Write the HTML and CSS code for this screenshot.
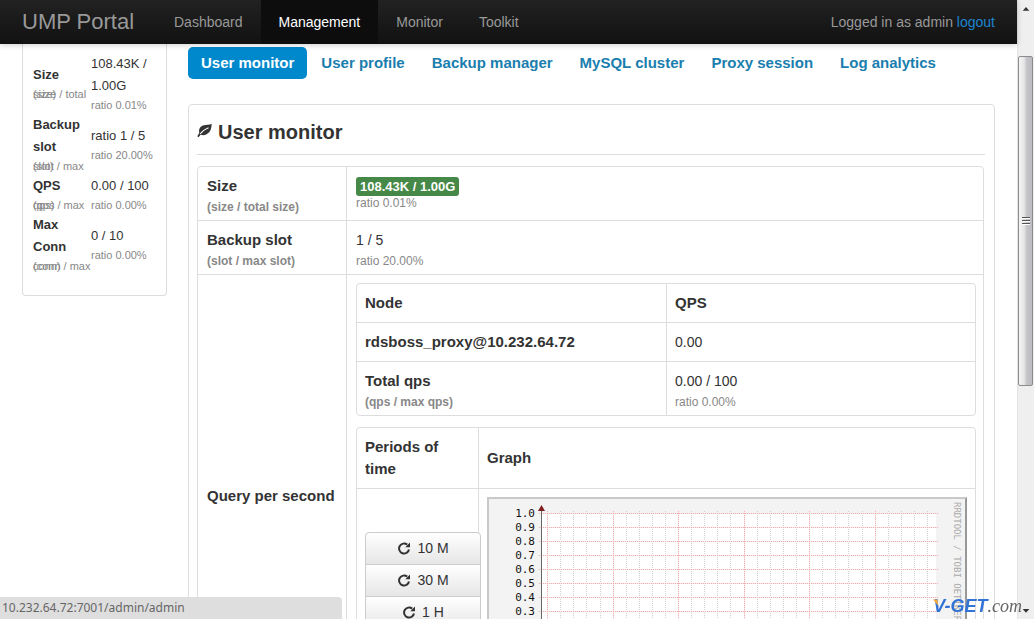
FILE: index.html
```html
<!DOCTYPE html>
<html lang="en">
<head>
<meta charset="utf-8">
<title>UMP Portal</title>
<link rel="stylesheet" href="styles.css">
</head>
<body>
<svg class="defs" aria-hidden="true">
  <symbol id="repeat" viewBox="0 0 14 14">
    <path d="M12 8.500A5 5 0 1 1 10.200 3.600" fill="none" stroke="#333" stroke-width="2"/>
    <path d="M13 1.500V6.200H8.300z" fill="#333"/>
  </symbol>
</svg>
<div class="window">
  <div class="page">
    <header class="navbar">
      <a class="brand" href="#">UMP Portal</a>
      <nav class="menu">
        <a href="#">Dashboard</a>
        <a class="active" href="#">Management</a>
        <a href="#">Monitor</a>
        <a href="#">Toolkit</a>
      </nav>
      <p class="login">Logged in as admin <a href="#">logout</a></p>
    </header>
    <div class="content">
      <aside class="sidebar">
        <table class="stats">
          <tr><th>Size<small>(size / total size)</small></th><td>108.43K / 1.00G<small>ratio 0.01%</small></td></tr>
          <tr><th>Backup slot<small>(slot / max slot)</small></th><td>ratio 1 / 5<small>ratio 20.00%</small></td></tr>
          <tr><th>QPS<small>(qps / max qps)</small></th><td>0.00 / 100<small>ratio 0.00%</small></td></tr>
          <tr><th>Max Conn<small>(conn / max conn)</small></th><td>0 / 10<small>ratio 0.00%</small></td></tr>
        </table>
      </aside>
      <main class="main">
        <nav class="pills">
          <a class="active" href="#">User monitor</a>
          <a href="#">User profile</a>
          <a href="#">Backup manager</a>
          <a href="#">MySQL cluster</a>
          <a href="#">Proxy session</a>
          <a href="#">Log analytics</a>
        </nav>
        <section class="panel">
          <h1>
            <svg class="leaf" viewBox="0 0 14 14" aria-hidden="true">
              <path d="M13.700.6C12 2 8.500 1.300 5.600 2.400 2.500 3.600 1.400 6.300 2.200 9.200L.3 12.400l1.200.9 1.800-2.300c3 1 6.200.2 8.200-2.500C13.300 6 13.600 3.200 13.700.6z" fill="#333"/>
              <path d="M3 10.300C5 7.200 7.600 5.800 10.800 4.400" fill="none" stroke="#fff" stroke-width="1"/>
            </svg>
            User monitor
          </h1>
          <table class="grid outer">
            <tr><th>Size<small>(size / total size)</small></th><td><span class="badge">108.43K / 1.00G</span><small>ratio 0.01%</small></td></tr>
            <tr><th>Backup slot<small>(slot / max slot)</small></th><td>1 / 5<small>ratio 20.00%</small></td></tr>
            <tr>
              <th>Query per second</th>
              <td>
                <table class="grid nodes">
                  <tr><th>Node</th><th>QPS</th></tr>
                  <tr><th>rdsboss_proxy@10.232.64.72</th><td>0.00</td></tr>
                  <tr><th>Total qps<small>(qps / max qps)</small></th><td>0.00 / 100<small>ratio 0.00%</small></td></tr>
                </table>
                <table class="grid graphs">
                  <tr><th>Periods of time</th><th>Graph</th></tr>
                  <tr>
                    <td class="periods">
                      <div class="buttons">
                        <button type="button"><svg aria-hidden="true"><use href="#repeat"/></svg>10 M</button>
                        <button type="button"><svg aria-hidden="true"><use href="#repeat"/></svg>30 M</button>
                        <button type="button"><svg aria-hidden="true"><use href="#repeat"/></svg>1 H</button>
                      </div>
                    </td>
                    <td>
                      <svg class="chart" viewBox="0 0 480 203" role="img" aria-label="Queries per second">
                        <defs>
                          <path id="major-lines" d="M60.500 14V171M126.500 14V171M191.500 14V171M257.500 14V171M322.500 14V171M388.500 14V171M52 16.500H451M52 30.500H451M52 44.500H451M52 58.500H451M52 72.500H451M52 86.500H451M52 100.500H451M52 114.500H451M52 128.500H451M52 142.500H451M52 156.500H451"/>
                        </defs>
                        <rect width="480" height="203" fill="#f3f3f3"/>
                        <path d="M0 0H480L478 2H2V201L0 203z" fill="#c9c9c9"/>
                        <path d="M480 0V203H0L2 201H478V2z" fill="#999"/>
                        <rect x="55" y="16" width="394" height="155" fill="#fff"/>
                        <path class="minor" d="M73.500 14V171M86.500 14V171M99.500 14V171M113.500 14V171M139.500 14V171M152.500 14V171M165.500 14V171M178.500 14V171M204.500 14V171M217.500 14V171M230.500 14V171M243.500 14V171M270.500 14V171M283.500 14V171M296.500 14V171M309.500 14V171M335.500 14V171M348.500 14V171M361.500 14V171M375.500 14V171M401.500 14V171M414.500 14V171M427.500 14V171M440.500 14V171"/>
                        <use class="major-base" href="#major-lines"/>
                        <use class="major" href="#major-lines"/>
                        <path d="M54.500 12V171" stroke="#666"/>
                        <path d="M51 14L54.500 8 58 14z" fill="#802020"/>
                        <g class="axis">
                          <text x="48" y="20">1.0</text><text x="48" y="34">0.9</text><text x="48" y="48">0.8</text><text x="48" y="62">0.7</text><text x="48" y="76">0.6</text><text x="48" y="90">0.5</text><text x="48" y="104">0.4</text><text x="48" y="118">0.3</text>
                        </g>
                        <text class="credit" transform="translate(467 5) rotate(90)">RRDTOOL / TOBI OETIKER</text>
                      </svg>
                    </td>
                  </tr>
                </table>
              </td>
            </tr>
          </table>
        </section>
      </main>
    </div>
  </div>
  <div class="scrollbar" aria-hidden="true">
    <svg viewBox="0 0 17 17"><path d="M5 11L8.500 7 12 11z" fill="#333"/></svg>
    <div class="space-top"></div>
    <div class="thumb"><i></i><i></i><i></i></div>
    <div class="space-bottom"></div>
    <svg viewBox="0 0 17 17"><path d="M5 7L8.500 11 12 7z" fill="#333"/></svg>
  </div>
</div>
<div class="status">10.232.64.72:7001/admin/admin</div>
<div class="watermark">
  <b>V-GET</b><i>.com</i>
  <svg viewBox="0 0 8 8" aria-hidden="true"><path d="M0 0H5L6 7z" fill="#f5a93b"/></svg>
</div>
</body>
</html>
```
FILE: styles.css
```css
* { box-sizing: border-box; }
body {
  margin: 0;
  font: 14px/22px "Liberation Sans", Arial, sans-serif;
  color: #333;
  background: #fff;
}
a { color: #1a7eae; text-decoration: none; }
.defs { display: none; }
.window { display: flex; height: 100vh; overflow: hidden; }
.page { flex: 1; min-width: 0; }

.navbar {
  position: relative;
  display: flex;
  align-items: center;
  height: 44px;
  padding: 0 22px;
  background: linear-gradient(#222, #111);
  box-shadow: 0 1px 6px rgba(0, 0, 0, .2);
  color: #999;
}
.brand { width: 134px; font-size: 22px; color: #999; }
.menu { display: flex; }
.menu a { padding: 0 18px; line-height: 44px; color: #999; }
.menu .active { background: #0d0d0d; color: #fff; }
.login { margin: 0 0 0 auto; }
.login a { color: #1c86d1; }

.content { display: flex; align-items: flex-start; gap: 21px; padding: 0 22px; }
.sidebar {
  flex: 0 0 145px;
  padding: 9px 7px 20px 10px;
  border: 1px solid #ddd;
  border-top: 0;
  border-radius: 0 0 4px 4px;
}
.stats {
  width: 100%;
  table-layout: fixed;
  border-spacing: 0;
  font-size: 13px;
}
.stats th, .stats td { padding: 0; text-align: left; vertical-align: middle; }
.stats th { width: 58px; }
.stats small {
  display: block;
  height: 17px;
  padding-top: 8px;
  font-size: 11px;
  font-weight: normal;
  line-height: 0;
  color: #888;
}

.main { flex: 1; min-width: 0; }
.pills { display: flex; gap: 1px; padding: 3px 0 25px; }
.pills a {
  padding: 5px 13px;
  border-radius: 5px;
  font-size: 15px;
  font-weight: bold;
  white-space: nowrap;
}
.pills .active { background: #0088cc; color: #fff; }
.panel { padding: 8px 9px 9px 8px; border: 1px solid #ddd; border-radius: 4px; }
h1 {
  display: flex;
  align-items: center;
  gap: 6px;
  margin: 0 0 11px;
  padding: 4px 0 7px;
  border-bottom: 1px solid #ddd;
  font-size: 20px;
  line-height: 30px;
}
.leaf { width: 15px; height: 15px; margin-bottom: 4px; }

.grid {
  width: 100%;
  table-layout: fixed;
  border: 1px solid #ddd;
  border-radius: 4px;
  border-spacing: 0;
}
.outer { width: calc(100% - 1px); }
.grid th, .grid td { padding: 8px; text-align: left; vertical-align: middle; }
.grid th { font-size: 15px; }
.grid tr > * + * { border-left: 1px solid #ddd; }
.grid tr + tr > * { border-top: 1px solid #ddd; }
.grid small {
  display: block;
  margin-bottom: -5px;
  font-size: 12px;
  line-height: 20px;
  color: #888;
}
.grid .badge + small { margin-bottom: 0; line-height: 15px; }
.outer > tbody > tr > * { padding: 8px 7px 8px 9px; }
.outer > tbody > tr > th { width: 148px; }
.badge {
  display: block;
  width: fit-content;
  padding: 0 4px;
  border-radius: 3px;
  background: #468847;
  color: #fff;
  font-size: 13px;
  font-weight: bold;
  line-height: 19px;
}
.nodes { margin-bottom: 11px; }
.graphs th:first-child { width: 121px; }
.grid .periods { padding-top: 43px; vertical-align: top; }
.buttons { display: flex; flex-direction: column; width: 116px; position: relative; }
.buttons button {
  display: flex;
  align-items: center;
  justify-content: center;
  gap: 6px;
  height: 33px;
  padding: 0 0 2px;
  border: 1px solid #ccc;
  background: linear-gradient(#fff, #e6e6e6);
  font: inherit;
  color: #333;
}
.buttons button + button { margin-top: -1px; }
.buttons button:first-child { border-radius: 4px 4px 0 0; }
.buttons svg { width: 14px; height: 14px; }
.chart { display: block; width: 480px; max-width: 100%; }
.minor, .major { fill: none; stroke-dasharray: 1 1; }
.minor { stroke: #d0d0d0; }
.major { stroke: #eeb0b0; }
.major-base { fill: none; stroke: #fbe6e6; }
.axis { font: 11px "DejaVu Sans Mono", monospace; text-anchor: end; fill: #111; }
.credit { font: 9px "DejaVu Sans Mono", monospace; fill: #aaa; }

.scrollbar {
  display: flex;
  flex: 0 0 17px;
  flex-direction: column;
  border-left: 1px solid #e4e4e4;
  background: #efefef;
}
.scrollbar svg { flex: 0 0 17px; }
.space-top { flex: 39; }
.space-bottom { flex: 217; }
.thumb {
  display: flex;
  flex: 329;
  flex-direction: column;
  align-items: center;
  justify-content: center;
  gap: 1px;
  margin-right: 1px;
  border: 1px solid #8c8c8c;
  border-radius: 2px;
  background: linear-gradient(90deg, #f5f5f5, #e4e4e4 40%, #c4c4c8 60%, #bdbdc1);
}
.thumb i { width: 8px; height: 2px; border-top: 1px solid #555; background: #fff; }

.status {
  position: fixed;
  left: 0;
  bottom: 0;
  width: 342px;
  height: 22px;
  padding-left: 2px;
  border-radius: 0 4px 0 0;
  background: #dedede;
  color: #666;
  font: 12px/22px "Noto Sans", sans-serif;
}
.watermark {
  position: fixed;
  right: 12px;
  bottom: 3px;
  display: flex;
  font-size: 18px;
  line-height: 20px;
}
.watermark svg { position: absolute; left: 0; top: 3px; width: 7px; height: 8px; }
.watermark b { font-style: italic; color: #3273d6; }
.watermark i { font-family: "Liberation Serif", serif; color: #666; }
```
